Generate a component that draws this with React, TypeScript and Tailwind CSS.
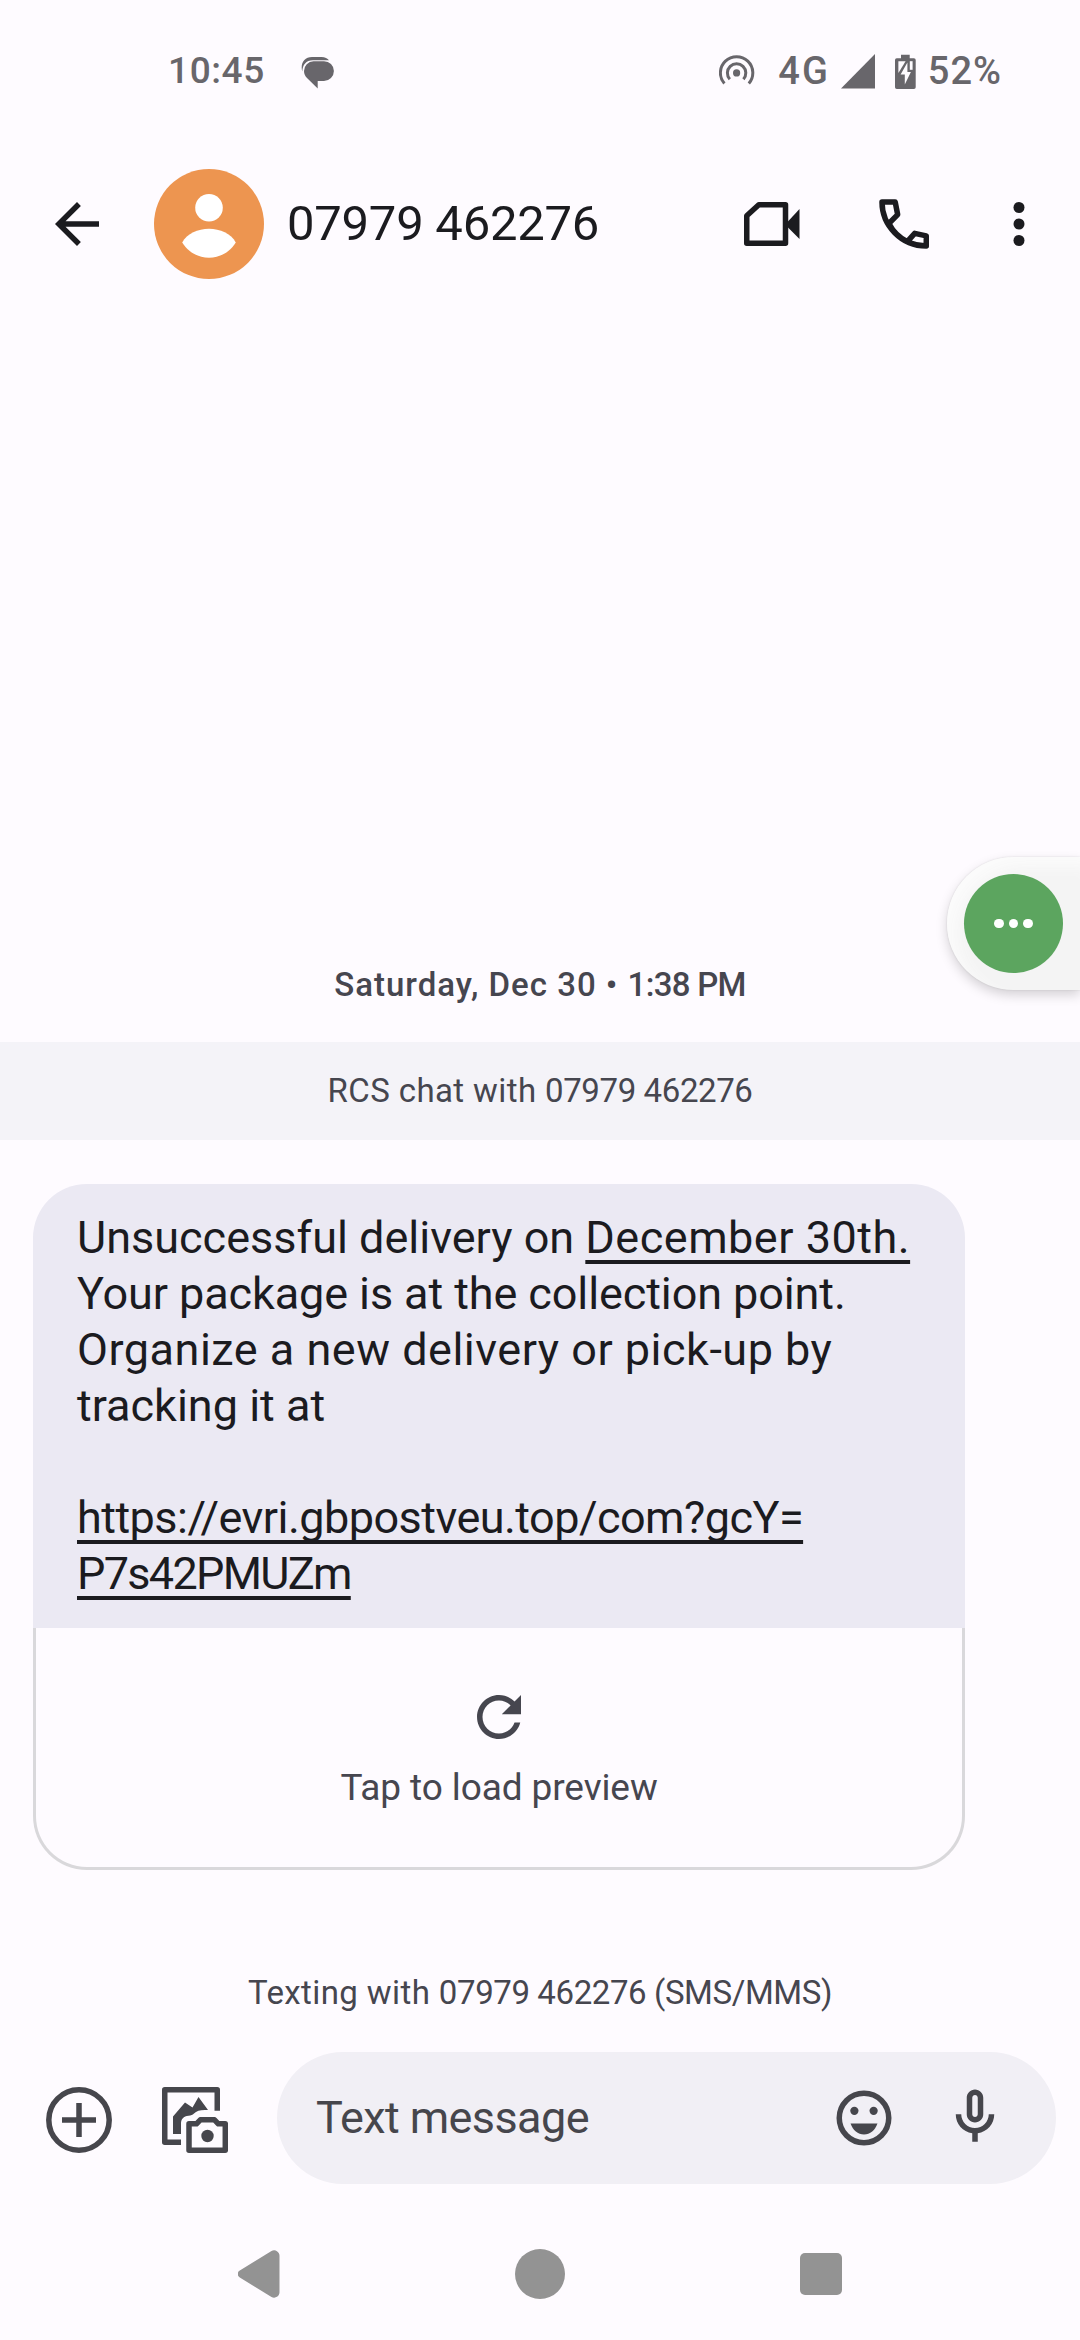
import clsx from "clsx";
import type { ReactNode } from "react";

const CONTACT = "07979 462276";

type IconProps = {
  className?: string;
  children: ReactNode;
};

// 24 unit material grid, drawn at 66px
function Icon({ className, children }: IconProps) {
  return (
    <svg
      viewBox="0 0 24 24"
      fill="currentColor"
      className={clsx("w-[66px] h-[66px] shrink-0", className)}
    >
      {children}
    </svg>
  );
}

function StatusBar() {
  return (
    <div className="flex items-center h-[142px] pl-[168px] pr-[78px] text-[#68666b] font-medium">
      <span className="text-[37px] tracking-[0.6px]">10:45</span>
      <svg viewBox="0 0 33 32" fill="currentColor" className="w-[33px] h-[32px] ml-[36px] mt-[3px]">
        <path d="M1.3 14.5C-.9 7 3 0 11 0h9.5c3.5 0 6 1.3 7.5 3.2H12C5 3.2 1.5 8 1.3 14.5z" />
        <path d="M12.5 4.2H23a9.9 9.9 0 0 1 0 19.8h-6.3v7.5L6 21c-2-2-3-4.3-3-7a9.7 9.7 0 0 1 9.5-9.8z" />
      </svg>

      <div className="flex items-center ml-auto">
        <svg
          viewBox="0 0 36 32"
          fill="none"
          stroke="currentColor"
          strokeWidth="3"
          className="w-[36px] h-[32px]"
        >
          <path d="M5.4 28.5a16.2 16.2 0 1 1 24.4 0" />
          <path d="M10.8 24.2a9.2 9.2 0 1 1 13.6 0" />
          <circle cx="17.6" cy="17.9" r="3.6" fill="currentColor" stroke="none" />
        </svg>
        <span className="text-[38px] tracking-[2px] ml-[23px]">4G</span>
        <svg viewBox="0 0 34 35" fill="currentColor" className="w-[34px] h-[35px] ml-[11px]">
          <path d="M34 0v34.5H0z" />
        </svg>
        <svg viewBox="0 0 21 35" fill="currentColor" className="w-[21px] h-[35px] ml-[20px]">
          <path d="M6 .7h8.7v3.5h4.2a1.8 1.8 0 0 1 1.8 1.8v27.2a1.8 1.8 0 0 1-1.8 1.8H1.8A1.8 1.8 0 0 1 0 33.2V6a1.8 1.8 0 0 1 1.8-1.8H6z" />
          <g fill="#fefbff">
            <path d="M3.4 7.2h7.2L3.4 19z" />
            <path d="M14.8 7.2h2.8v8.6h-2.8z" />
            <path d="M12.4 8.5L5.6 20.5h4.2v10L15.9 18h-3.5z" />
          </g>
        </svg>
        <span className="text-[38px] tracking-[1px] ml-[12px]">52%</span>
      </div>
    </div>
  );
}

function Header() {
  return (
    <header className="flex items-center h-[164px] pl-[44px] pr-[28px] text-[#1b1b1f]">
      <Icon>
        <path d="M20 11H7.83l5.59-5.59L12 4l-8 8 8 8 1.41-1.41L7.83 13H20v-2z" />
      </Icon>
      <div className="w-[110px] h-[110px] ml-[44px] rounded-full bg-[#ed9550] shrink-0">
        <svg viewBox="0 0 110 110" fill="white">
          <circle cx="55" cy="38.8" r="13.8" />
          <path d="M28.2 73.5C33 64.5 44 59.7 55 59.7s22 4.8 26.8 13.8C76 83 66 88.7 55 88.7S34 83 28.2 73.5z" />
        </svg>
      </div>
      <h1 className="ml-[23px] text-[49px] tracking-[-0.25px]">{CONTACT}</h1>

      <div className="flex items-center ml-auto">
        <svg viewBox="0 0 56 44" className="w-[56px] h-[44px]">
          <path
            d="M2.75 13.8L14.8 2.75H41.5v38.5H2.75z"
            fill="none"
            stroke="currentColor"
            strokeWidth="5.5"
            strokeLinejoin="round"
          />
          <path d="M43 20.5L55.5 7v30L43 24.5z" fill="currentColor" />
        </svg>
        <Icon className="ml-[71px]">
          <path
            d="M4 4h4.8l.9 4.6-3.2 3.2A15 15 0 0 0 13.2 18.4l2.7-3L20.1 16.3V20C11 20 4 12.5 4 4z"
            fill="none"
            stroke="currentColor"
            strokeWidth="2"
            strokeLinejoin="round"
          />
        </Icon>
        <Icon className="ml-[49px]">
          <circle cx="12" cy="6" r="2" />
          <circle cx="12" cy="12" r="2" />
          <circle cx="12" cy="18" r="2" />
        </Icon>
      </div>
    </header>
  );
}

function FloatingBubble() {
  return (
    <div className="absolute right-0 top-[857px] w-[133px] h-[133px] p-[17px] rounded-l-full bg-[#f4f4f4] shadow-[0_5px_12px_rgba(0,0,0,0.17),0_0_2px_rgba(0,0,0,0.12),inset_10px_10px_14px_#fbfbfb]">
      <div className="flex items-center justify-center gap-[5px] w-[99px] h-[99px] rounded-full bg-[#5ca55f]">
        <span className="w-[9.5px] h-[9.5px] rounded-full bg-white" />
        <span className="w-[9.5px] h-[9.5px] rounded-full bg-white" />
        <span className="w-[9.5px] h-[9.5px] rounded-full bg-white" />
      </div>
    </div>
  );
}

const LINK = "underline decoration-[4px] underline-offset-[7px] [text-decoration-skip-ink:none]";

function Message() {
  return (
    <div className="w-[932px] ml-[33px] mt-[44px]">
      <div className="h-[444px] pl-[44px] pt-[26px] rounded-t-[54px] bg-[#ebe9f3] text-[45px] leading-[56px] text-[#1b1b1f] whitespace-nowrap">
        <p>
          Unsuccessful delivery on{" "}
          <span className={clsx(LINK, "tracking-[0.5px]")}>December 30th.</span>
        </p>
        <p className="tracking-[-0.1px]">Your package is at the collection point.</p>
        <p className="tracking-[0.5px]">Organize a new delivery or pick-up by</p>
        <p>tracking it at</p>
        <p className="mt-[56px]">
          <span className={clsx(LINK, "tracking-[-0.54px]")}>
            https://evri.gbpostveu.top/com?gcY=
          </span>
        </p>
        <p>
          <span className={clsx(LINK, "tracking-[-1.7px]")}>P7s42PMUZm</span>
        </p>
      </div>
      <div className="flex flex-col items-center h-[242px] pt-[56px] border-[3px] border-t-0 border-[#d9d8db] rounded-b-[54px] text-[#46464f]">
        <Icon>
          <path d="M17.65 6.35C16.2 4.9 14.21 4 12 4c-4.42 0-7.99 3.58-7.99 8s3.57 8 7.99 8c3.73 0 6.84-2.55 7.73-6h-2.08c-.82 2.33-3.04 4-5.65 4-3.31 0-6-2.69-6-6s2.69-6 6-6c1.66 0 3.14.69 4.22 1.78L13 11h7V4l-2.35 2.35z" />
        </Icon>
        <span className="mt-[16px] text-[37px] leading-[44px] tracking-[-0.1px]">
          Tap to load preview
        </span>
      </div>
    </div>
  );
}

function Compose() {
  return (
    <div className="flex items-center h-[132px] pl-[46px] pr-[24px] text-[#46464c]">
      <svg
        viewBox="0 0 66 66"
        fill="none"
        stroke="currentColor"
        strokeWidth="5.5"
        className="w-[66px] h-[66px] mt-[4px]"
      >
        <circle cx="33" cy="33" r="30.2" />
        <path d="M33 16v34M16 33h34" />
      </svg>
      <svg
        viewBox="0 0 66 66"
        fill="none"
        stroke="currentColor"
        strokeWidth="5.5"
        strokeLinejoin="round"
        className="w-[66px] h-[66px] ml-[50px] mt-[4px]"
      >
        <path d="M19 55.2H2.75V2.75h52.5v21" />
        <path
          d="M11 47V29.5l12-14 7.5 5 6-10.5L46 23c-7-.5-11 .5-14 3.5-1.5 1.5-3 2-5.5 2.2-5 .5-7.5 3.3-7.5 7.8V47z"
          fill="currentColor"
          stroke="none"
        />
        <path d="M27 36.8h7.5l3.8-4h14.2l3.8 4h7v26.4H27z" />
        <circle cx="45.5" cy="49" r="6.2" fill="currentColor" stroke="none" />
      </svg>

      <div className="flex items-center flex-1 h-full ml-[49px] pl-[39px] pr-[48px] rounded-full bg-[#f1eff5]">
        <span className="text-[45px] tracking-[-0.6px]">Text message</span>
        <Icon className="ml-auto">
          <circle cx="12" cy="12" r="9" fill="none" stroke="currentColor" strokeWidth="2" />
          <circle cx="8.5" cy="9.4" r="1.5" />
          <circle cx="15.5" cy="9.4" r="1.5" />
          <path d="M7.1 14h9.8c-.8 2.4-2.7 4-4.9 4s-4.1-1.6-4.9-4z" />
        </Icon>
        <Icon className="ml-[45px] -mt-[2px]">
          <path d="M12 14c1.66 0 3-1.34 3-3V5c0-1.66-1.34-3-3-3S9 3.34 9 5v6c0 1.66 1.34 3 3 3zm-1-9c0-.55.45-1 1-1s1 .45 1 1v6c0 .55-.45 1-1 1s-1-.45-1-1V5zm6 6c0 2.76-2.24 5-5 5s-5-2.24-5-5H5c0 3.53 2.61 6.43 6 6.92V21h2v-3.08c3.39-.49 6-3.39 6-6.92h-2z" />
        </Icon>
      </div>
    </div>
  );
}

function NavBar() {
  return (
    <nav className="flex items-center justify-between flex-1 pl-[238px] pr-[238px] pt-[24px] text-[#939393]">
      <svg viewBox="0 0 42 48" fill="currentColor" className="w-[42px] h-[48px]">
        <path d="M33.5.9A5.5 5.5 0 0 1 41.5 6v36a5.5 5.5 0 0 1-8 5.1L1.8 27.5a4 4 0 0 1 0-7z" />
      </svg>
      <span className="w-[50px] h-[50px] rounded-full bg-[#939393]" />
      <span className="w-[42px] h-[42px] rounded-[5px] bg-[#939393]" />
    </nav>
  );
}

export default function App() {
  return (
    <div className="relative flex flex-col w-[1080px] h-[2340px] overflow-hidden bg-[#fefbff] font-['Roboto',sans-serif]">
      <StatusBar />
      <Header />
      <main className="flex flex-col h-[1746px] pt-[654px] text-[#46464f]">
        <p className="h-[50px] leading-[50px] text-center text-[33px] font-medium tracking-[1px]">
          Saturday, Dec 30 • <span className="tracking-[-0.7px]">1:38 PM</span>
        </p>
        <p className="h-[98px] mt-[32px] leading-[98px] text-center text-[33px] tracking-[0.4px] bg-[#f4f3f8]">
          RCS chat with <span className="tracking-[-0.4px]">{CONTACT}</span>
        </p>
        <Message />
        <p className="h-[50px] mt-auto mb-[34px] leading-[50px] text-center text-[33px] tracking-[0.4px]">
          Texting with <span className="tracking-[-0.4px]">{CONTACT} (SMS/MMS)</span>
        </p>
      </main>
      <Compose />
      <NavBar />
      <FloatingBubble />
    </div>
  );
}
